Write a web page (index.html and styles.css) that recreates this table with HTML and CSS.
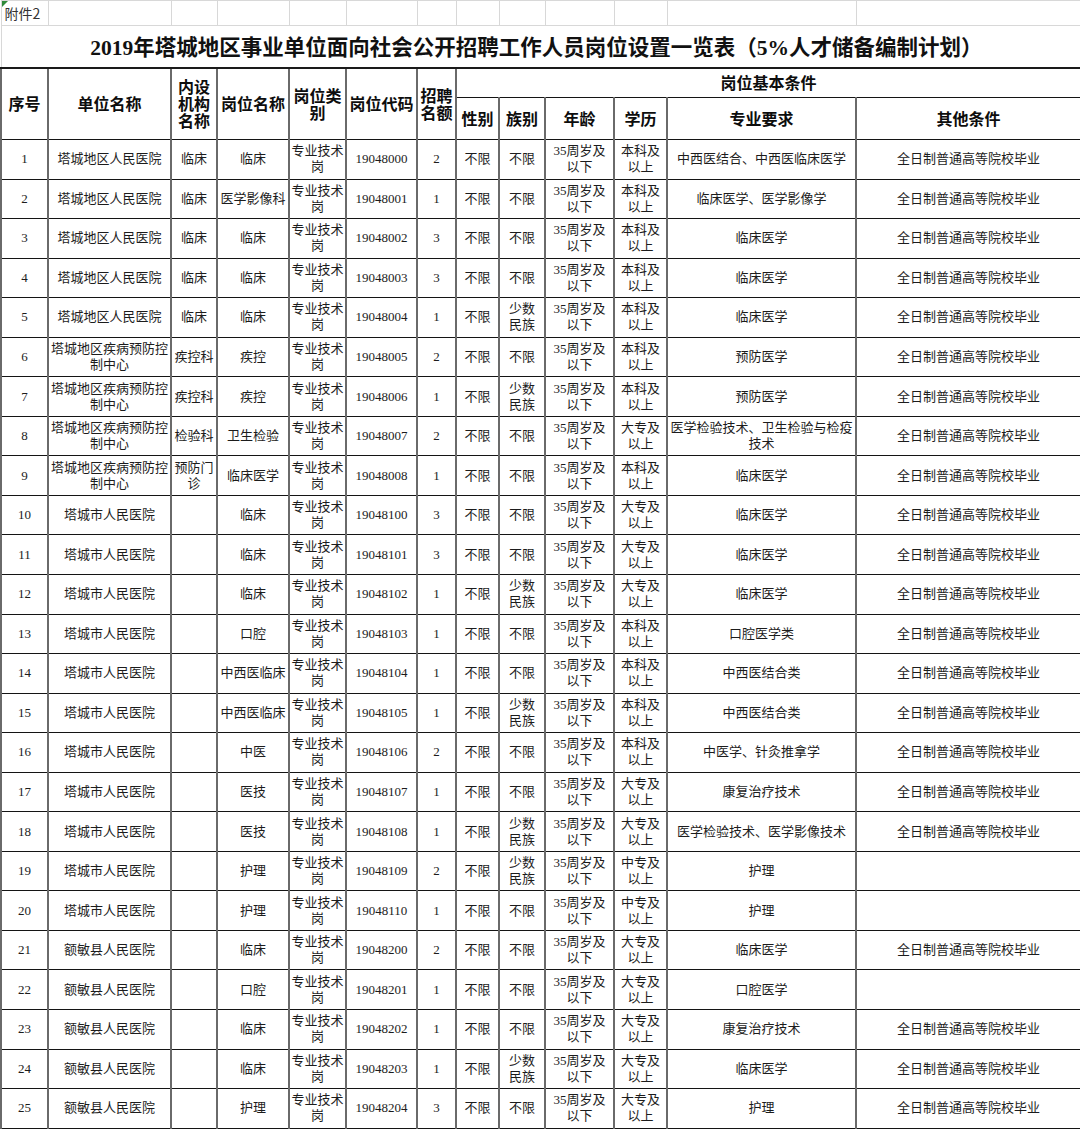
FILE: index.html
```html
<!DOCTYPE html>
<html lang="zh-CN">
<head>
<meta charset="utf-8">
<title>2019年塔城地区事业单位面向社会公开招聘工作人员岗位设置一览表</title>
<link rel="stylesheet" href="styles.css">
</head>
<body>
<table class="sheet">
  <colgroup>
    <col class="c-no"><col class="c-unit"><col class="c-dept"><col class="c-post"><col class="c-type"><col class="c-code"><col class="c-num"><col class="c-sex"><col class="c-eth"><col class="c-age"><col class="c-edu"><col class="c-major"><col class="c-other">
  </colgroup>
  <tbody>
    <tr class="pre">
      <td class="pre-label">附件2</td><td></td><td></td><td></td><td></td><td></td><td></td><td></td><td></td><td></td><td></td><td></td><td></td>
    </tr>
    <tr class="title-row">
      <td class="title" colspan="13">2019年塔城地区事业单位面向社会公开招聘工作人员岗位设置一览表（5%人才储备编制计划）</td>
    </tr>
    <tr class="hd hd1">
      <td rowspan="2">序号</td>
      <td rowspan="2">单位名称</td>
      <td rowspan="2">内设机构名称</td>
      <td rowspan="2">岗位名称</td>
      <td rowspan="2">岗位类别</td>
      <td rowspan="2">岗位代码</td>
      <td rowspan="2">招聘名额</td>
      <td colspan="6">岗位基本条件</td>
    </tr>
    <tr class="hd hd2">
      <td>性别</td><td>族别</td><td>年龄</td><td>学历</td><td>专业要求</td><td>其他条件</td>
    </tr>

    <tr><td>1</td><td>塔城地区人民医院</td><td>临床</td><td>临床</td><td>专业技术<br>岗</td><td>19048000</td><td>2</td><td>不限</td><td>不限</td><td>35周岁及<br>以下</td><td>本科及<br>以上</td><td>中西医结合、中西医临床医学</td><td>全日制普通高等院校毕业</td></tr>
    <tr><td>2</td><td>塔城地区人民医院</td><td>临床</td><td>医学影像科</td><td>专业技术<br>岗</td><td>19048001</td><td>1</td><td>不限</td><td>不限</td><td>35周岁及<br>以下</td><td>本科及<br>以上</td><td>临床医学、医学影像学</td><td>全日制普通高等院校毕业</td></tr>
    <tr><td>3</td><td>塔城地区人民医院</td><td>临床</td><td>临床</td><td>专业技术<br>岗</td><td>19048002</td><td>3</td><td>不限</td><td>不限</td><td>35周岁及<br>以下</td><td>本科及<br>以上</td><td>临床医学</td><td>全日制普通高等院校毕业</td></tr>
    <tr><td>4</td><td>塔城地区人民医院</td><td>临床</td><td>临床</td><td>专业技术<br>岗</td><td>19048003</td><td>3</td><td>不限</td><td>不限</td><td>35周岁及<br>以下</td><td>本科及<br>以上</td><td>临床医学</td><td>全日制普通高等院校毕业</td></tr>
    <tr><td>5</td><td>塔城地区人民医院</td><td>临床</td><td>临床</td><td>专业技术<br>岗</td><td>19048004</td><td>1</td><td>不限</td><td>少数<br>民族</td><td>35周岁及<br>以下</td><td>本科及<br>以上</td><td>临床医学</td><td>全日制普通高等院校毕业</td></tr>
    <tr><td>6</td><td>塔城地区疾病预防控<br>制中心</td><td>疾控科</td><td>疾控</td><td>专业技术<br>岗</td><td>19048005</td><td>2</td><td>不限</td><td>不限</td><td>35周岁及<br>以下</td><td>本科及<br>以上</td><td>预防医学</td><td>全日制普通高等院校毕业</td></tr>
    <tr><td>7</td><td>塔城地区疾病预防控<br>制中心</td><td>疾控科</td><td>疾控</td><td>专业技术<br>岗</td><td>19048006</td><td>1</td><td>不限</td><td>少数<br>民族</td><td>35周岁及<br>以下</td><td>本科及<br>以上</td><td>预防医学</td><td>全日制普通高等院校毕业</td></tr>
    <tr><td>8</td><td>塔城地区疾病预防控<br>制中心</td><td>检验科</td><td>卫生检验</td><td>专业技术<br>岗</td><td>19048007</td><td>2</td><td>不限</td><td>不限</td><td>35周岁及<br>以下</td><td>大专及<br>以上</td><td>医学检验技术、卫生检验与检疫<br>技术</td><td>全日制普通高等院校毕业</td></tr>
    <tr><td>9</td><td>塔城地区疾病预防控<br>制中心</td><td>预防门<br>诊</td><td>临床医学</td><td>专业技术<br>岗</td><td>19048008</td><td>1</td><td>不限</td><td>不限</td><td>35周岁及<br>以下</td><td>本科及<br>以上</td><td>临床医学</td><td>全日制普通高等院校毕业</td></tr>
    <tr><td>10</td><td>塔城市人民医院</td><td></td><td>临床</td><td>专业技术<br>岗</td><td>19048100</td><td>3</td><td>不限</td><td>不限</td><td>35周岁及<br>以下</td><td>大专及<br>以上</td><td>临床医学</td><td>全日制普通高等院校毕业</td></tr>
    <tr><td>11</td><td>塔城市人民医院</td><td></td><td>临床</td><td>专业技术<br>岗</td><td>19048101</td><td>3</td><td>不限</td><td>不限</td><td>35周岁及<br>以下</td><td>大专及<br>以上</td><td>临床医学</td><td>全日制普通高等院校毕业</td></tr>
    <tr><td>12</td><td>塔城市人民医院</td><td></td><td>临床</td><td>专业技术<br>岗</td><td>19048102</td><td>1</td><td>不限</td><td>少数<br>民族</td><td>35周岁及<br>以下</td><td>大专及<br>以上</td><td>临床医学</td><td>全日制普通高等院校毕业</td></tr>
    <tr><td>13</td><td>塔城市人民医院</td><td></td><td>口腔</td><td>专业技术<br>岗</td><td>19048103</td><td>1</td><td>不限</td><td>不限</td><td>35周岁及<br>以下</td><td>本科及<br>以上</td><td>口腔医学类</td><td>全日制普通高等院校毕业</td></tr>
    <tr><td>14</td><td>塔城市人民医院</td><td></td><td>中西医临床</td><td>专业技术<br>岗</td><td>19048104</td><td>1</td><td>不限</td><td>不限</td><td>35周岁及<br>以下</td><td>本科及<br>以上</td><td>中西医结合类</td><td>全日制普通高等院校毕业</td></tr>
    <tr><td>15</td><td>塔城市人民医院</td><td></td><td>中西医临床</td><td>专业技术<br>岗</td><td>19048105</td><td>1</td><td>不限</td><td>少数<br>民族</td><td>35周岁及<br>以下</td><td>本科及<br>以上</td><td>中西医结合类</td><td>全日制普通高等院校毕业</td></tr>
    <tr><td>16</td><td>塔城市人民医院</td><td></td><td>中医</td><td>专业技术<br>岗</td><td>19048106</td><td>2</td><td>不限</td><td>不限</td><td>35周岁及<br>以下</td><td>本科及<br>以上</td><td>中医学、针灸推拿学</td><td>全日制普通高等院校毕业</td></tr>
    <tr><td>17</td><td>塔城市人民医院</td><td></td><td>医技</td><td>专业技术<br>岗</td><td>19048107</td><td>1</td><td>不限</td><td>不限</td><td>35周岁及<br>以下</td><td>大专及<br>以上</td><td>康复治疗技术</td><td>全日制普通高等院校毕业</td></tr>
    <tr><td>18</td><td>塔城市人民医院</td><td></td><td>医技</td><td>专业技术<br>岗</td><td>19048108</td><td>1</td><td>不限</td><td>少数<br>民族</td><td>35周岁及<br>以下</td><td>大专及<br>以上</td><td>医学检验技术、医学影像技术</td><td>全日制普通高等院校毕业</td></tr>
    <tr><td>19</td><td>塔城市人民医院</td><td></td><td>护理</td><td>专业技术<br>岗</td><td>19048109</td><td>2</td><td>不限</td><td>少数<br>民族</td><td>35周岁及<br>以下</td><td>中专及<br>以上</td><td>护理</td><td></td></tr>
    <tr><td>20</td><td>塔城市人民医院</td><td></td><td>护理</td><td>专业技术<br>岗</td><td>19048110</td><td>1</td><td>不限</td><td>不限</td><td>35周岁及<br>以下</td><td>中专及<br>以上</td><td>护理</td><td></td></tr>
    <tr><td>21</td><td>额敏县人民医院</td><td></td><td>临床</td><td>专业技术<br>岗</td><td>19048200</td><td>2</td><td>不限</td><td>不限</td><td>35周岁及<br>以下</td><td>大专及<br>以上</td><td>临床医学</td><td>全日制普通高等院校毕业</td></tr>
    <tr><td>22</td><td>额敏县人民医院</td><td></td><td>口腔</td><td>专业技术<br>岗</td><td>19048201</td><td>1</td><td>不限</td><td>不限</td><td>35周岁及<br>以下</td><td>大专及<br>以上</td><td>口腔医学</td><td></td></tr>
    <tr><td>23</td><td>额敏县人民医院</td><td></td><td>临床</td><td>专业技术<br>岗</td><td>19048202</td><td>1</td><td>不限</td><td>不限</td><td>35周岁及<br>以下</td><td>大专及<br>以上</td><td>康复治疗技术</td><td>全日制普通高等院校毕业</td></tr>
    <tr><td>24</td><td>额敏县人民医院</td><td></td><td>临床</td><td>专业技术<br>岗</td><td>19048203</td><td>1</td><td>不限</td><td>少数<br>民族</td><td>35周岁及<br>以下</td><td>大专及<br>以上</td><td>临床医学</td><td>全日制普通高等院校毕业</td></tr>
    <tr><td>25</td><td>额敏县人民医院</td><td></td><td>护理</td><td>专业技术<br>岗</td><td>19048204</td><td>3</td><td>不限</td><td>不限</td><td>35周岁及<br>以下</td><td>大专及<br>以上</td><td>护理</td><td>全日制普通高等院校毕业</td></tr>
  </tbody>
</table>
</body>
</html>
```

FILE: styles.css
```css
html, body {
  margin: 0;
  padding: 0;
  background: #ffffff;
}

.sheet {
  border-collapse: collapse;
  table-layout: fixed;
  width: 1080px;
  font-family: "Liberation Serif", "Noto Sans CJK SC", serif;
  font-size: 13px;
  color: #1c1c1c;
}

.c-no { width: 47px; }
.c-unit { width: 123px; }
.c-dept { width: 46px; }
.c-post { width: 72px; }
.c-type { width: 57px; }
.c-code { width: 71px; }
.c-num { width: 39px; }
.c-sex { width: 43px; }
.c-eth { width: 46px; }
.c-age { width: 69px; }
.c-edu { width: 53px; }
.c-major { width: 189px; }
.c-other { width: 225px; }

.sheet td {
  padding: 0 1px;
  text-align: center;
  vertical-align: middle;
  line-height: 16px;
  white-space: nowrap;
  overflow: hidden;
  border-top: 1px solid #141414;
  border-bottom: 1px solid #141414;
  border-left: 2px solid #6a6a6a;
  border-right: 2px solid #6a6a6a;
}

.sheet tr {
  height: 39.56px;
}

/* spreadsheet gridline row */
.sheet .pre {
  height: 25px;
}
.sheet .pre td {
  border: 1px solid #d8d8d8;
  font-family: "Noto Sans CJK SC", sans-serif;
  font-size: 14px;
  color: #333333;
  line-height: 20px;
}
.sheet .pre-label {
  text-align: left;
  padding-left: 3px;
  position: relative;
}
.sheet .pre-label::before {
  content: "";
  position: absolute;
  left: 0;
  top: 0;
  width: 0;
  height: 0;
  border-top: 6px solid #2f8a3a;
  border-right: 6px solid transparent;
}

/* title */
.sheet .title-row {
  height: 42px;
}
.sheet .title {
  font-family: "Liberation Serif", "Noto Sans CJK SC", serif;
  font-weight: 700;
  font-size: 21.5px;
  line-height: 26px;
  color: #111111;
  padding-top: 4px;
  padding-right: 10px;
  border-left: 1px solid #d8d8d8;
  border-right: 1px solid #d8d8d8;
  border-top: 1px solid #d8d8d8;
  border-bottom: 2px solid #1a1a1a;
}

/* column headings */
.sheet .hd td {
  font-family: "Noto Sans CJK SC", sans-serif;
  font-weight: 700;
  font-size: 16px;
  line-height: 17px;
  color: #0d0d0d;
  white-space: normal;
  word-break: break-all;
}
.sheet .hd1 {
  height: 30px;
}
.sheet .hd2 {
  height: 42px;
}
```
